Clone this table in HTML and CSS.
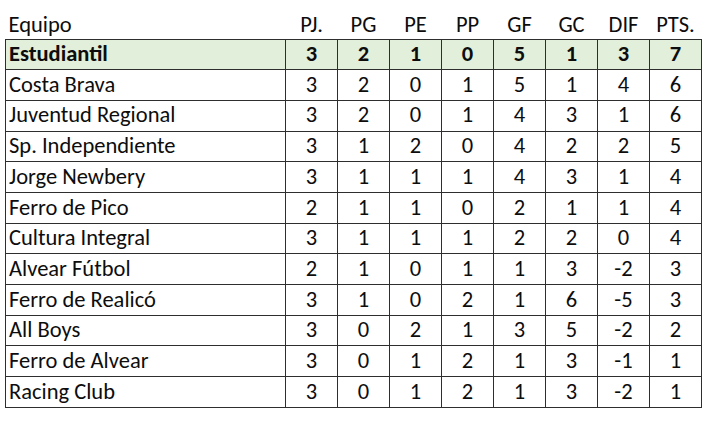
FILE: index.html
```html
<!DOCTYPE html>
<html lang="es">
<head>
<meta charset="utf-8">
<title>Tabla de posiciones</title>
<link rel="stylesheet" href="styles.css">
</head>
<body>
<table class="standings">
  <thead>
    <tr class="head">
      <th class="team">Equipo</th><th>PJ.</th><th>PG</th><th>PE</th><th>PP</th><th>GF</th><th>GC</th><th>DIF</th><th>PTS.</th>
    </tr>
  </thead>
  <tbody>
    <tr class="leader"><td class="team">Estudiantil</td><td>3</td><td>2</td><td>1</td><td>0</td><td>5</td><td>1</td><td>3</td><td>7</td></tr>
    <tr><td class="team">Costa Brava</td><td>3</td><td>2</td><td>0</td><td>1</td><td>5</td><td>1</td><td>4</td><td>6</td></tr>
    <tr><td class="team">Juventud Regional</td><td>3</td><td>2</td><td>0</td><td>1</td><td>4</td><td>3</td><td>1</td><td>6</td></tr>
    <tr><td class="team">Sp. Independiente</td><td>3</td><td>1</td><td>2</td><td>0</td><td>4</td><td>2</td><td>2</td><td>5</td></tr>
    <tr><td class="team">Jorge Newbery</td><td>3</td><td>1</td><td>1</td><td>1</td><td>4</td><td>3</td><td>1</td><td>4</td></tr>
    <tr><td class="team">Ferro de Pico</td><td>2</td><td>1</td><td>1</td><td>0</td><td>2</td><td>1</td><td>1</td><td>4</td></tr>
    <tr><td class="team">Cultura Integral</td><td>3</td><td>1</td><td>1</td><td>1</td><td>2</td><td>2</td><td>0</td><td>4</td></tr>
    <tr><td class="team">Alvear Fútbol</td><td>2</td><td>1</td><td>0</td><td>1</td><td>1</td><td>3</td><td>-2</td><td>3</td></tr>
    <tr><td class="team">Ferro de Realicó</td><td>3</td><td>1</td><td>0</td><td>2</td><td>1</td><td>6</td><td>-5</td><td>3</td></tr>
    <tr><td class="team">All Boys</td><td>3</td><td>0</td><td>2</td><td>1</td><td>3</td><td>5</td><td>-2</td><td>2</td></tr>
    <tr><td class="team">Ferro de Alvear</td><td>3</td><td>0</td><td>1</td><td>2</td><td>1</td><td>3</td><td>-1</td><td>1</td></tr>
    <tr><td class="team">Racing Club</td><td>3</td><td>0</td><td>1</td><td>2</td><td>1</td><td>3</td><td>-2</td><td>1</td></tr>
  </tbody>
</table>
</body>
</html>
```

FILE: styles.css
```css
html, body {
  margin: 0;
  padding: 0;
  background: #ffffff;
}

body {
  font-family: Carlito, Calibri, "Open Sans", sans-serif;
  font-size: 22.5px;
  color: #0d0d0d;
}

.standings {
  border-collapse: collapse;
  margin-left: 5px;
  table-layout: fixed;
  width: 696px;
}

.standings th,
.standings td {
  width: 52px;
  padding: 0;
  text-align: center;
  font-weight: normal;
  white-space: nowrap;
  line-height: 1;
}

.standings .team {
  width: 280px;
  text-align: left;
  padding-left: 3px;
  box-sizing: border-box;
}

.head th {
  height: 39px;
  vertical-align: bottom;
  padding-bottom: 2px;
  box-sizing: border-box;
}

.standings td {
  height: 30.7px;
  border: 1px solid #2e2e2e;
  box-sizing: border-box;
}

.leader td {
  background: #e2efda;
  font-weight: bold;
}
```
